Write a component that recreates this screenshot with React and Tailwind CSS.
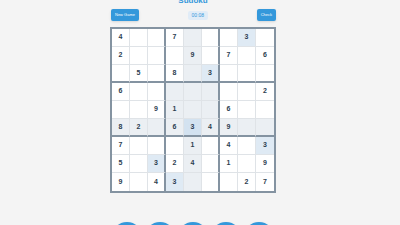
import React from 'react';

const puzzle = [
  [4, 0, 0, 7, 0, 0, 0, 3, 0],
  [2, 0, 0, 0, 9, 0, 7, 0, 6],
  [0, 5, 0, 8, 0, 3, 0, 0, 0],
  [6, 0, 0, 0, 0, 0, 0, 0, 2],
  [0, 0, 9, 1, 0, 0, 6, 0, 0],
  [8, 2, 0, 6, 3, 4, 9, 0, 0],
  [7, 0, 0, 0, 1, 0, 4, 0, 3],
  [5, 0, 3, 2, 4, 0, 1, 0, 9],
  [9, 0, 4, 3, 0, 0, 0, 2, 7],
];

const selected = { r: 5, c: 4 };

function cellBg(r, c, value) {
  const selValue = puzzle[selected.r][selected.c];
  if (r === selected.r && c === selected.c) return 'bg-[#d3e2f0]';
  if (value && value === selValue) return 'bg-[#dfeaf4]';
  const sameBox =
    Math.floor(r / 3) === Math.floor(selected.r / 3) &&
    Math.floor(c / 3) === Math.floor(selected.c / 3);
  if (r === selected.r || c === selected.c || sameBox) return 'bg-[#ebeff3]';
  return 'bg-white';
}

function Cell({ r, c, value }) {
  const right =
    c === 8 ? '' : c === 2 || c === 5 ? 'border-r-2 border-r-[#8493a1]' : 'border-r border-r-[#dfe3e7]';
  const bottom =
    r === 8 ? '' : r === 2 || r === 5 ? 'border-b-2 border-b-[#8493a1]' : 'border-b border-b-[#dfe3e7]';
  return (
    <div
      className={`flex h-[18px] items-center justify-center text-[7px] font-bold text-[#2c3e50] ${right} ${bottom} ${cellBg(r, c, value)}`}
    >
      {value || ''}
    </div>
  );
}

export default function App() {
  return (
    <div className="min-h-screen overflow-hidden bg-[#f4f4f4]" style={{ fontFamily: '"Liberation Sans", Arial, sans-serif' }}>
      <div className="flex w-[386px] flex-col items-center">
        <h1 className="-mt-[3px] text-[8px] font-bold leading-[8px] text-[#3498db]">Sudoku</h1>

        <div className="mt-[4px] flex w-[166px] items-center justify-between pl-[1px]">
          <button className="flex h-[12px] items-center rounded-[2px] bg-[#3498db] px-[4px] text-[4px] leading-[4px] text-white shadow-sm">
            New Game
          </button>
          <div className="flex h-[9px] items-center rounded-[2px] bg-[#e1ecf7] px-[4px] text-[5px] leading-[5px] text-[#3498db]">
            00:08
          </div>
          <button className="flex h-[12px] items-center rounded-[2px] bg-[#3498db] px-[4px] text-[4px] leading-[4px] text-white shadow-sm">
            Check
          </button>
        </div>

        <div className="mt-[6px] grid w-[166px] grid-cols-9 border-2 border-[#8493a1] bg-white">
          {puzzle.map((row, r) =>
            row.map((value, c) => <Cell key={`${r}-${c}`} r={r} c={c} value={value} />)
          )}
        </div>

        {/* number pad, only its top edge is on screen */}
        <div className="mt-[29px] flex gap-[3px]">
          {[1, 2, 3, 4, 5].map((n) => (
            <button
              key={n}
              aria-label={`Number ${n}`}
              className="h-[30px] w-[30px] rounded-full bg-[#3498db] shadow"
            />
          ))}
        </div>
      </div>
    </div>
  );
}
